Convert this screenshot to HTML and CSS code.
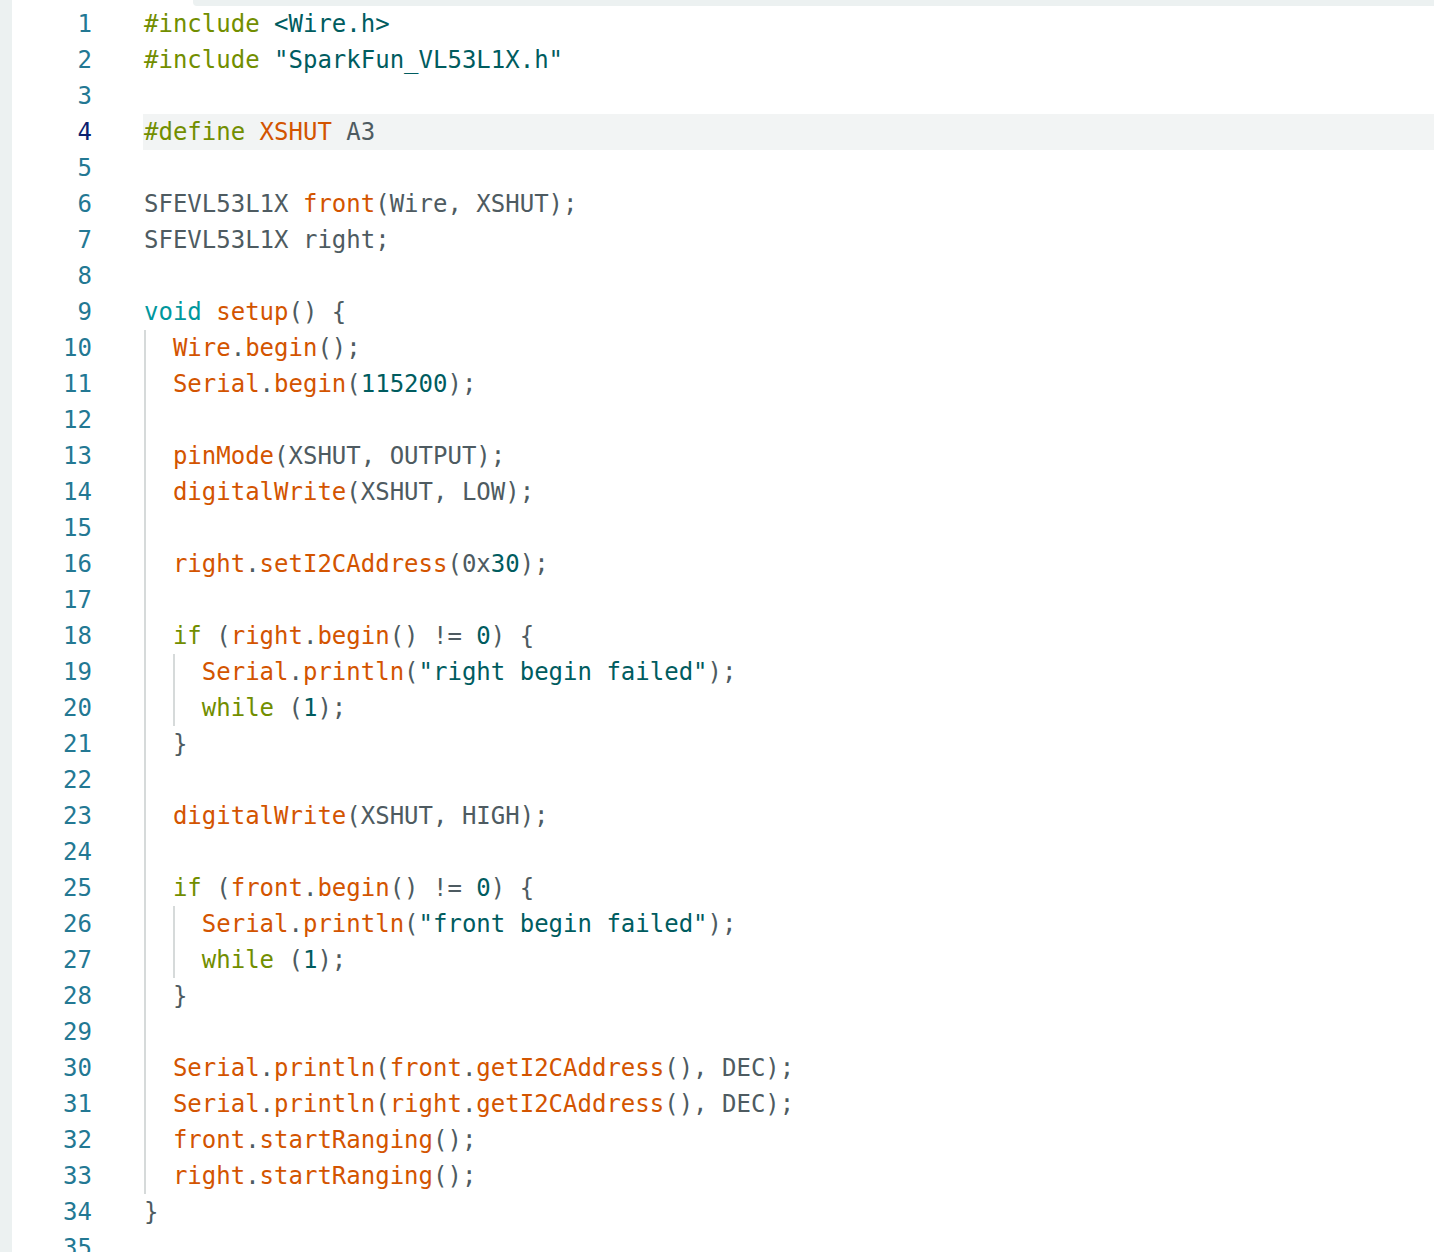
FILE: index.html
```html
<!DOCTYPE html>
<html>
<head>
<meta charset="utf-8">
<link rel="stylesheet" href="styles.css">
</head>
<body>
<div class="app">
  <div class="strip"></div>
  <div class="editor">
    <div class="topband"></div>
    <div class="row"><span class="ln">1</span><span class="code"><span class="kw">#include</span> <span class="str">&lt;Wire.h&gt;</span></span></div>
    <div class="row"><span class="ln">2</span><span class="code"><span class="kw">#include</span> <span class="str">"SparkFun_VL53L1X.h"</span></span></div>
    <div class="row"><span class="ln">3</span><span class="code"></span></div>
    <div class="row current"><span class="ln">4</span><span class="code"><span class="kw">#define</span> <span class="fn">XSHUT</span> A3</span></div>
    <div class="row"><span class="ln">5</span><span class="code"></span></div>
    <div class="row"><span class="ln">6</span><span class="code">SFEVL53L1X <span class="fn">front</span>(Wire, XSHUT);</span></div>
    <div class="row"><span class="ln">7</span><span class="code">SFEVL53L1X right;</span></div>
    <div class="row"><span class="ln">8</span><span class="code"></span></div>
    <div class="row"><span class="ln">9</span><span class="code"><span class="ty">void</span> <span class="fn">setup</span>() {</span></div>
    <div class="row"><span class="ln">10</span><span class="code"><span class="ind"></span><span class="fn">Wire</span>.<span class="fn">begin</span>();</span></div>
    <div class="row"><span class="ln">11</span><span class="code"><span class="ind"></span><span class="fn">Serial</span>.<span class="fn">begin</span>(<span class="num">115200</span>);</span></div>
    <div class="row"><span class="ln">12</span><span class="code"><span class="ind"></span></span></div>
    <div class="row"><span class="ln">13</span><span class="code"><span class="ind"></span><span class="fn">pinMode</span>(XSHUT, OUTPUT);</span></div>
    <div class="row"><span class="ln">14</span><span class="code"><span class="ind"></span><span class="fn">digitalWrite</span>(XSHUT, LOW);</span></div>
    <div class="row"><span class="ln">15</span><span class="code"><span class="ind"></span></span></div>
    <div class="row"><span class="ln">16</span><span class="code"><span class="ind"></span><span class="fn">right</span>.<span class="fn">setI2CAddress</span>(0x<span class="num">30</span>);</span></div>
    <div class="row"><span class="ln">17</span><span class="code"><span class="ind"></span></span></div>
    <div class="row"><span class="ln">18</span><span class="code"><span class="ind"></span><span class="kw">if</span> (<span class="fn">right</span>.<span class="fn">begin</span>() != <span class="num">0</span>) {</span></div>
    <div class="row"><span class="ln">19</span><span class="code"><span class="ind"></span><span class="ind"></span><span class="fn">Serial</span>.<span class="fn">println</span>(<span class="str">"right begin failed"</span>);</span></div>
    <div class="row"><span class="ln">20</span><span class="code"><span class="ind"></span><span class="ind"></span><span class="kw">while</span> (<span class="num">1</span>);</span></div>
    <div class="row"><span class="ln">21</span><span class="code"><span class="ind"></span>}</span></div>
    <div class="row"><span class="ln">22</span><span class="code"><span class="ind"></span></span></div>
    <div class="row"><span class="ln">23</span><span class="code"><span class="ind"></span><span class="fn">digitalWrite</span>(XSHUT, HIGH);</span></div>
    <div class="row"><span class="ln">24</span><span class="code"><span class="ind"></span></span></div>
    <div class="row"><span class="ln">25</span><span class="code"><span class="ind"></span><span class="kw">if</span> (<span class="fn">front</span>.<span class="fn">begin</span>() != <span class="num">0</span>) {</span></div>
    <div class="row"><span class="ln">26</span><span class="code"><span class="ind"></span><span class="ind"></span><span class="fn">Serial</span>.<span class="fn">println</span>(<span class="str">"front begin failed"</span>);</span></div>
    <div class="row"><span class="ln">27</span><span class="code"><span class="ind"></span><span class="ind"></span><span class="kw">while</span> (<span class="num">1</span>);</span></div>
    <div class="row"><span class="ln">28</span><span class="code"><span class="ind"></span>}</span></div>
    <div class="row"><span class="ln">29</span><span class="code"><span class="ind"></span></span></div>
    <div class="row"><span class="ln">30</span><span class="code"><span class="ind"></span><span class="fn">Serial</span>.<span class="fn">println</span>(<span class="fn">front</span>.<span class="fn">getI2CAddress</span>(), DEC);</span></div>
    <div class="row"><span class="ln">31</span><span class="code"><span class="ind"></span><span class="fn">Serial</span>.<span class="fn">println</span>(<span class="fn">right</span>.<span class="fn">getI2CAddress</span>(), DEC);</span></div>
    <div class="row"><span class="ln">32</span><span class="code"><span class="ind"></span><span class="fn">front</span>.<span class="fn">startRanging</span>();</span></div>
    <div class="row"><span class="ln">33</span><span class="code"><span class="ind"></span><span class="fn">right</span>.<span class="fn">startRanging</span>();</span></div>
    <div class="row"><span class="ln">34</span><span class="code">}</span></div>
    <div class="row"><span class="ln">35</span><span class="code"></span></div>
  </div>
</div>
</body>
</html>
```

FILE: styles.css
```css
html, body {
  margin: 0;
  padding: 0;
  height: 100%;
  overflow: hidden;
  background: #ffffff;
}

.app {
  display: flex;
  height: 100%;
}

.strip {
  width: 12px;
  flex: none;
  background: #ecf1f1;
}

.editor {
  position: relative;
  flex: 1;
  padding-top: 6px;
  font-family: "DejaVu Sans Mono", "Liberation Mono", monospace;
  font-size: 24px;
  line-height: 36px;
  color: #4e5b61;
}

.topband {
  position: absolute;
  top: 0;
  left: 181px;
  right: 0;
  height: 6px;
  background: #ecf1f1;
  border-bottom-left-radius: 4px;
}

.row {
  display: flex;
  height: 36px;
}

.ln {
  width: 80px;
  flex: none;
  text-align: right;
  color: #237893;
  margin-right: 51px;
}

.row.current .ln {
  color: #0b216f;
}

.code {
  flex: 1;
  white-space: pre;
  padding-left: 1px;
}

.row.current .code {
  background: #f2f4f4;
}

.ind {
  display: inline-block;
  width: 2ch;
  height: 36px;
  vertical-align: top;
  box-shadow: inset 2px 0 0 #d6dada;
}

.kw { color: #728e00; }
.str { color: #005c5f; }
.num { color: #005c5f; }
.fn { color: #d35400; }
.ty { color: #00979d; }
```
